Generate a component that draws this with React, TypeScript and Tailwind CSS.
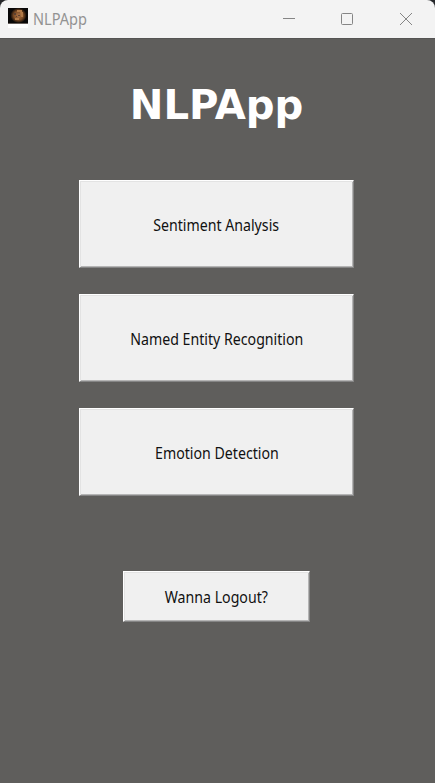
import type { ReactNode } from 'react';

function TitleBar() {
  return (
    <div className="bg-[#26282b]">
      <header className="flex h-[38px] items-start rounded-t-[8px] bg-[#f3f3f3]">
        <svg className="ml-2 mt-2 h-5 w-5 shrink-0" viewBox="0 0 20 20">
          <defs>
            <radialGradient id="glow">
              <stop offset="0" stopColor="#a87146" />
              <stop offset="0.6" stopColor="#7d4c25" />
              <stop offset="1" stopColor="#100b08" />
            </radialGradient>
          </defs>
          <path fill="#fff" d="M0 0h20v20H0z" />
          <path fill="#090808" d="M0 0h20v15H0z" />
          <path fill="#665e5a" d="M0 15h20v1H0z" />
          <ellipse cx="10.5" cy="7.5" rx="8" ry="7.5" fill="url(#glow)" />
          <path fill="#b17a48" d="M9 2h5v2H9zM12 4h3v5h-2zM7 10h4v2H7z" />
          <path fill="#5b4030" d="M6 5h2v2H6zM10 7h2v1h-2zM8 8h1v1H8z" />
        </svg>
        <span className="ml-[5px] mt-[9px] w-[60px] whitespace-nowrap text-[16px] leading-5 text-[#929292]">
          <span className="inline-block origin-left scale-x-[0.91]">NLPApp</span>
        </span>
        <div className="ml-auto flex">
          <svg className="h-[38px] w-[58px]" viewBox="0 0 58 38" stroke="#858585" fill="none">
            <path d="M23 18.5h12" />
          </svg>
          <svg className="h-[38px] w-[58px]" viewBox="0 0 58 38" stroke="#858585" fill="none">
            <rect x="23.5" y="13.5" width="11" height="11" rx="1" />
          </svg>
          <svg className="h-[38px] w-[59px]" viewBox="0 0 59 38" stroke="#858585" fill="none">
            <path d="M24 13l12 12M36 13L24 25" />
          </svg>
        </div>
      </header>
    </div>
  );
}

function RaisedButton({ size, children }: { size: string; children: ReactNode }) {
  return (
    <button
      className={`flex items-center justify-center whitespace-nowrap border border-b-[#858585] border-l-white border-r-[#858585] border-t-white bg-[#f0f0f0] pt-px text-[16px] leading-5 text-[#111] shadow-[inset_1px_1px_0_#e3e3e3,inset_-1px_-1px_0_#b5b5b5] ${size}`}
    >
      {children}
    </button>
  );
}

export default function App() {
  return (
    <div className="flex h-[783px] w-[435px] flex-col overflow-hidden bg-[#5f5e5c] font-['Noto_Sans',sans-serif]">
      <TitleBar />
      <main className="flex flex-1 flex-col items-center border-t border-[#555453] pr-[2px]">
        <h1 className="mt-[41px] h-[50px] whitespace-nowrap font-['DejaVu_Sans',sans-serif] text-[41px] font-bold leading-[50px] text-white">
          <span className="inline-block scale-x-[0.98]">NLPApp</span>
        </h1>
        <div className="mt-[50px] flex flex-col gap-[26px]">
          <RaisedButton size="h-[88px] w-[275px]">
            <span className="scale-x-[0.885]">Sentiment Analysis</span>
          </RaisedButton>
          <RaisedButton size="h-[88px] w-[275px]">
            <span className="scale-x-[0.885]">Named Entity Recognition</span>
          </RaisedButton>
          <RaisedButton size="h-[88px] w-[275px]">
            <span className="scale-x-[0.885]">Emotion Detection</span>
          </RaisedButton>
        </div>
        <div className="mt-[75px]">
          <RaisedButton size="h-[51px] w-[187px]">
            <span className="scale-x-[0.885]">Wanna Logout?</span>
          </RaisedButton>
        </div>
      </main>
    </div>
  );
}
